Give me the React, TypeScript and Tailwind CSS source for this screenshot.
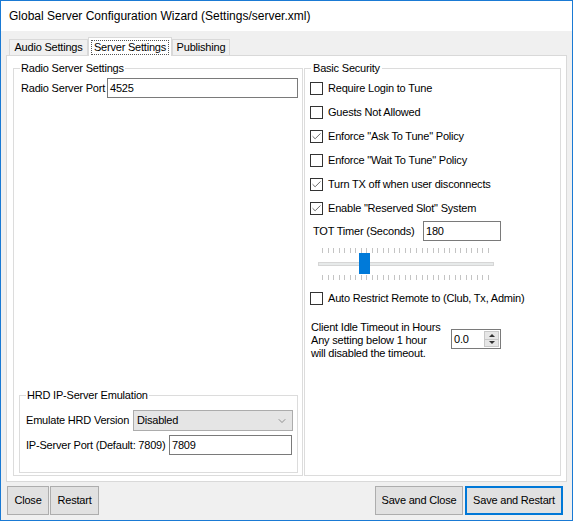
import { Check, ChevronDown } from 'lucide-react'

const font = "font-['Liberation_Sans',Arial,sans-serif]"

function CheckRow({ label, checked }: { label: string; checked?: boolean }) {
  return (
    <div className="flex h-[24px] items-center gap-[5px]">
      <span className="flex h-[13px] w-[13px] items-center justify-center border border-[#333333] bg-white">
        {checked && <Check className="h-[11px] w-[11px] text-[#333333]" strokeWidth={1.6} />}
      </span>
      <span>{label}</span>
    </div>
  )
}

function TextBox({ value, className }: { value: string; className: string }) {
  return (
    <div className={`flex h-[20px] items-center border border-[#7a7a7a] bg-white pl-[2px] ${className}`}>
      {value}
    </div>
  )
}

function Slider() {
  const ticks = Array.from({ length: 31 }, (_, i) => 6 + Math.round(i * 5.53))
  return (
    <svg width="180" height="44" className="block">
      {ticks.map((x) => (
        <line key={`a${x}`} x1={x + 0.5} x2={x + 0.5} y1={6} y2={11} stroke="#c4c4c4" />
      ))}
      {ticks.map((x) => (
        <line key={`b${x}`} x1={x + 0.5} x2={x + 0.5} y1={33} y2={38} stroke="#c4c4c4" />
      ))}
      <rect x={2.5} y={20.5} width={175} height={3} fill="#e7eaea" stroke="#d6d6d6" />
      <rect x={43} y={11} width={11} height={21} fill="#007ad9" />
    </svg>
  )
}

function Tab({ label, active, className }: { label: string; active?: boolean; className: string }) {
  if (active) {
    return (
      <div className={`relative z-10 -mb-px flex h-[19px] items-center justify-center border border-b-0 border-[#d9d9d9] bg-white ${className}`}>
        <span className="border border-dotted border-[#555] px-[2px] leading-[13px]">{label}</span>
      </div>
    )
  }
  return (
    <div className={`flex h-[16px] items-center justify-center border border-b-0 border-[#d9d9d9] bg-[#f0f0f0] ${className}`}>
      {label}
    </div>
  )
}

function Button({ label, className, primary }: { label: string; className: string; primary?: boolean }) {
  return (
    <div
      className={`flex h-[29px] items-center justify-center bg-[#e1e1e1] ${
        primary ? 'border-2 border-[#0078d7]' : 'border border-[#adadad]'
      } ${className}`}
    >
      {label}
    </div>
  )
}

export default function App() {
  return (
    <div className={`flex h-[521px] w-[573px] flex-col border border-[#1a7ad4] bg-[#f0f0f0] text-[11px] tracking-[-0.2px] text-black ${font}`}>
      {/* title bar */}
      <div className="flex h-[30px] items-center bg-white pl-[8px] text-[12px] tracking-normal">
        Global Server Configuration Wizard (Settings/server.xml)
      </div>

      <div className="flex flex-1 flex-col px-[5px] pt-[6px]">
        {/* tabs */}
        <div className="flex h-[18px] items-end pl-[3px]">
          <Tab label="Audio Settings" className="w-[79px]" />
          <Tab label="Server Settings" active className="w-[84px]" />
          <Tab label="Publishing" className="w-[58px]" />
        </div>

        {/* tab page */}
        <div className="flex h-[427px] gap-[1px] border border-[#d9d9d9] bg-white pb-[5px] pl-[6px] pr-[5px] pt-[6px]">
          <fieldset className="flex w-[290px] flex-col border border-[#dcdcdc]">
            <legend className="ml-[6px] px-[1px] leading-[13px]">Radio Server Settings</legend>
            <div className="mt-[3px] flex h-[20px] items-center pl-[7px] pr-[4px]">
              <span className="w-[86px]">Radio Server Port</span>
              <TextBox value="4525" className="flex-1" />
            </div>

            <fieldset className="mb-[2px] ml-[5px] mr-[4px] mt-auto h-[84px] border border-[#dcdcdc]">
              <legend className="ml-[6px] px-[1px] leading-[13px]">HRD IP-Server Emulation</legend>
              <div className="mt-[8px] flex h-[21px] items-center pl-[6px]">
                <span className="w-[107px]">Emulate HRD Version</span>
                <div className="flex h-[21px] w-[160px] items-center justify-between border border-[#acacac] bg-[#e5e5e5] pl-[3px] pr-[4px]">
                  <span>Disabled</span>
                  <ChevronDown className="h-[12px] w-[12px] text-[#555]" strokeWidth={1.2} />
                </div>
              </div>
              <div className="mt-[4px] flex h-[20px] items-center pl-[6px]">
                <span className="w-[143px]">IP-Server Port (Default: 7809)</span>
                <TextBox value="7809" className="w-[123px]" />
              </div>
            </fieldset>
          </fieldset>

          <fieldset className="w-[257px] border border-[#dcdcdc]">
            <legend className="ml-[6px] px-[2px] leading-[13px]">Basic Security</legend>
            <div className="flex flex-col pl-[5px] pt-[1px]">
              <CheckRow label="Require Login to Tune" />
              <CheckRow label="Guests Not Allowed" />
              <CheckRow label={'Enforce "Ask To Tune" Policy'} checked />
              <CheckRow label={'Enforce "Wait To Tune" Policy'} />
              <CheckRow label="Turn TX off when user disconnects" checked />
              <CheckRow label={'Enable "Reserved Slot" System'} checked />

              <div className="flex h-[22px] items-center pl-[3px]">
                <span className="w-[110px]">TOT Timer (Seconds)</span>
                <TextBox value="180" className="w-[78px]" />
              </div>

              <div className="pl-[6px]">
                <Slider />
              </div>

              <CheckRow label="Auto Restrict Remote to (Club, Tx, Admin)" />

              <div className="mt-[11px] flex items-start pl-[1px]">
                <p className="w-[140px] leading-[13px]">
                  Client Idle Timeout in Hours
                  <br />
                  Any setting below 1 hour
                  <br />
                  will disabled the timeout.
                </p>
                <div className="mt-[8px] flex h-[20px] w-[50px] items-center justify-between border border-[#7a7a7a] bg-white pl-[2px] pr-[1px]">
                  <span>0.0</span>
                  <div className="flex h-[16px] w-[15px] flex-col border border-[#c8c8c8] bg-[#e6e6e6]">
                    <div className="flex flex-1 items-center justify-center border-b border-[#c8c8c8]">
                      <span className="h-0 w-0 border-x-[3px] border-b-[3px] border-x-transparent border-b-[#333]" />
                    </div>
                    <div className="flex flex-1 items-center justify-center">
                      <span className="h-0 w-0 border-x-[3px] border-t-[3px] border-x-transparent border-t-[#333]" />
                    </div>
                  </div>
                </div>
              </div>
            </div>
          </fieldset>
        </div>

        {/* bottom buttons */}
        <div className="mb-[5px] mt-[4px] flex items-center pl-[1px] pr-[4px]">
          <Button label="Close" className="w-[42px]" />
          <Button label="Restart" className="ml-[1px] w-[49px]" />
          <Button label="Save and Close" className="ml-auto w-[88px]" />
          <Button label="Save and Restart" primary className="ml-[2px] w-[98px]" />
        </div>
      </div>
    </div>
  )
}
